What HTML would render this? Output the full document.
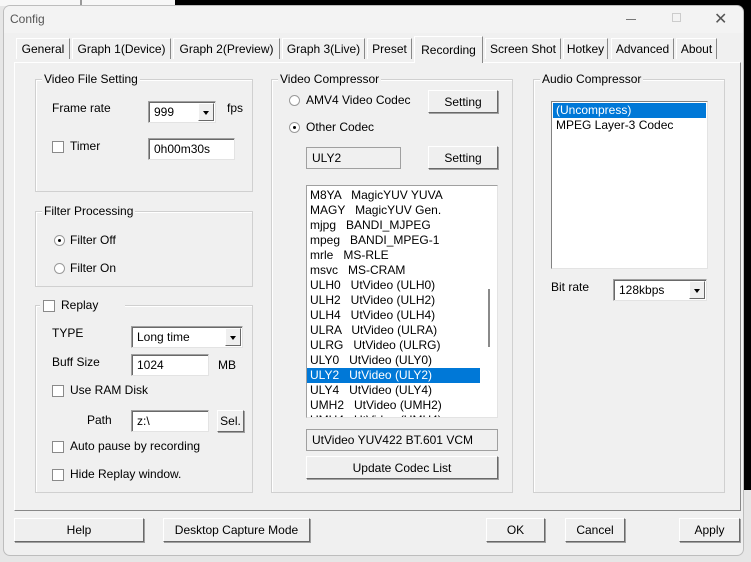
<!DOCTYPE html>
<html><head><meta charset="utf-8"><style>
*{box-sizing:border-box;margin:0;padding:0}
body{width:751px;height:562px;position:relative;overflow:hidden;background:#e6e6e6;font-family:"Liberation Sans",Arial,sans-serif;font-size:12px;color:#000}
.a{position:absolute}
.win{left:3px;top:5px;width:741px;height:551px;background:#f0f0f0;border:1px solid #bdbdbd;border-radius:7px;overflow:hidden}
.tb{left:0;top:0;width:100%;height:27px;background:#f3f3f3}
.tab{position:absolute;top:38px;height:21px;border:1px solid #fff;border-right-color:#888;border-bottom:none;background:#f0f0f0;text-align:center;line-height:20px;font-size:12px}
.grp{position:absolute;border:1px solid #d0d0d0;box-shadow:inset 1px 1px 0 #fff}
.grp>span{position:absolute;top:-8px;left:6px;background:#f0f0f0;padding:0 2px;font-size:12px}
.btn{position:absolute;background:#efefef;border:1px solid #fff;border-right-color:#696969;border-bottom-color:#696969;box-shadow:1px 1px 0 #a0a0a0;text-align:center;font-size:12px}
.edit{position:absolute;background:#fff;border:1px solid #a0a0a0;border-right-color:#e3e3e3;border-bottom-color:#e3e3e3;box-shadow:inset 1px 1px 0 #696969;padding-left:5px;font-size:12px}
.cb{position:absolute;width:12px;height:12px;background:#fff;border:1px solid #8a8a8a}
.rb{position:absolute;width:11px;height:11px;border-radius:50%;background:#fff;border:1px solid #9a9a9a}
.rb.on::after{content:"";position:absolute;left:3px;top:3px;width:3px;height:3px;border-radius:50%;background:#000}
.dd{position:absolute;right:1px;top:1px;bottom:1px;width:16px;background:#efefef;border:1px solid #fff;border-right-color:#696969;border-bottom-color:#696969}
.dd::after{content:"";position:absolute;left:4px;top:7px;border:3px solid transparent;border-top:4px solid #000}
.t{position:absolute;font-size:12px;white-space:nowrap}
.li{height:15px;line-height:15px;padding-left:3px;white-space:pre}
.sel{background:#0078d7;color:#fff}
</style></head><body>
<div class="a" style="left:0;top:0;width:175px;height:6px;background:#f7f7f7"></div>
<div class="a" style="left:175px;top:0;width:576px;height:490px;background:#000"></div>
<div class="a" style="left:80px;top:0;width:2px;height:6px;background:#999"></div>
<div class="a win">
 <div class="a tb"></div>
 <div class="t" style="left:6px;top:6px;color:#555;font-size:12px">Config</div>
 <div class="a" style="left:622px;top:13px;width:10px;height:1px;background:#777"></div>
 <div class="a" style="left:668px;top:7px;width:9px;height:9px;border:1px solid #ccc"></div>
 <div class="t" style="left:710px;top:3px;font-size:16px;color:#555">✕</div>
</div>
<!-- tab panel -->
<div class="a" style="left:14px;top:62px;width:727px;height:449px;border:1px solid #fff;border-right-color:#888;border-bottom-color:#888"></div>
<div class="tab" style="left:16px;width:54px">General</div>
<div class="tab" style="left:72px;width:99px">Graph 1(Device)</div>
<div class="tab" style="left:173px;width:107px">Graph 2(Preview)</div>
<div class="tab" style="left:282px;width:83px">Graph 3(Live)</div>
<div class="tab" style="left:367px;width:45px">Preset</div>
<div class="tab" style="left:414px;width:69px;top:36px;height:27px;z-index:2;line-height:26px;margin-top:0">Recording</div>
<div class="tab" style="left:485px;width:76px">Screen Shot</div>
<div class="tab" style="left:563px;width:45px">Hotkey</div>
<div class="tab" style="left:611px;width:63px">Advanced</div>
<div class="tab" style="left:676px;width:41px">About</div>

<!-- Video File Setting -->
<div class="grp" style="left:35px;top:79px;width:218px;height:113px"><span>Video File Setting</span></div>
<div class="t" style="left:52px;top:101px">Frame rate</div>
<div class="edit" style="left:148px;top:101px;width:68px;height:22px;line-height:20px">999<div class="dd"></div></div>
<div class="t" style="left:227px;top:101px">fps</div>
<div class="cb" style="left:52px;top:141px"></div>
<div class="t" style="left:70px;top:139px">Timer</div>
<div class="edit" style="left:148px;top:138px;width:87px;height:22px;line-height:20px">0h00m30s</div>

<!-- Filter -->
<div class="grp" style="left:35px;top:211px;width:218px;height:76px"><span>Filter Processing</span></div>
<div class="rb on" style="left:54px;top:235px"></div>
<div class="t" style="left:70px;top:233px">Filter Off</div>
<div class="rb" style="left:54px;top:263px"></div>
<div class="t" style="left:70px;top:261px">Filter On</div>

<!-- Replay -->
<div class="grp" style="left:35px;top:305px;width:218px;height:188px"></div>
<div class="a" style="left:40px;top:298px;width:85px;height:14px;background:#f0f0f0"></div>
<div class="cb" style="left:43px;top:300px"></div>
<div class="t" style="left:61px;top:298px">Replay</div>
<div class="t" style="left:52px;top:326px">TYPE</div>
<div class="edit" style="left:131px;top:326px;width:112px;height:22px;line-height:20px">Long time<div class="dd"></div></div>
<div class="t" style="left:52px;top:355px">Buff Size</div>
<div class="edit" style="left:131px;top:354px;width:78px;height:22px;line-height:20px">1024</div>
<div class="t" style="left:218px;top:358px">MB</div>
<div class="cb" style="left:52px;top:385px"></div>
<div class="t" style="left:70px;top:383px">Use RAM Disk</div>
<div class="t" style="left:87px;top:413px">Path</div>
<div class="edit" style="left:131px;top:410px;width:78px;height:22px;line-height:20px">z:\</div>
<div class="btn" style="left:217px;top:410px;width:27px;height:22px;line-height:20px">Sel.</div>
<div class="cb" style="left:52px;top:441px"></div>
<div class="t" style="left:70px;top:439px">Auto pause by recording</div>
<div class="cb" style="left:52px;top:469px"></div>
<div class="t" style="left:70px;top:467px">Hide Replay window.</div>

<!-- Video Compressor -->
<div class="grp" style="left:271px;top:79px;width:242px;height:414px"><span>Video Compressor</span></div>
<div class="rb" style="left:289px;top:95px"></div>
<div class="t" style="left:306px;top:93px">AMV4 Video Codec</div>
<div class="btn" style="left:428px;top:90px;width:70px;height:23px;line-height:22px">Setting</div>
<div class="rb on" style="left:289px;top:122px"></div>
<div class="t" style="left:306px;top:120px">Other Codec</div>
<div class="a" style="left:306px;top:147px;width:95px;height:22px;border:1px solid #a0a0a0;background:#f0f0f0;line-height:20px;padding-left:5px">ULY2</div>
<div class="btn" style="left:428px;top:146px;width:70px;height:23px;line-height:22px">Setting</div>
<div class="a" style="left:306px;top:185px;width:192px;height:233px;background:#fff;border:1px solid #a0a0a0;border-right-color:#e3e3e3;border-bottom-color:#e3e3e3;overflow:hidden;padding-top:2px">
<div class="li">M8YA   MagicYUV YUVA</div>
<div class="li">MAGY   MagicYUV Gen.</div>
<div class="li">mjpg   BANDI_MJPEG</div>
<div class="li">mpeg   BANDI_MPEG-1</div>
<div class="li">mrle   MS-RLE</div>
<div class="li">msvc   MS-CRAM</div>
<div class="li">ULH0   UtVideo (ULH0)</div>
<div class="li">ULH2   UtVideo (ULH2)</div>
<div class="li">ULH4   UtVideo (ULH4)</div>
<div class="li">ULRA   UtVideo (ULRA)</div>
<div class="li">ULRG   UtVideo (ULRG)</div>
<div class="li">ULY0   UtVideo (ULY0)</div>
<div class="li sel" style="width:173px">ULY2   UtVideo (ULY2)</div>
<div class="li">ULY4   UtVideo (ULY4)</div>
<div class="li">UMH2   UtVideo (UMH2)</div>
<div class="li">UMH4   UtVideo (UMH4)</div>
<div class="a" style="left:181px;top:103px;width:2px;height:58px;background:#8a8a8a"></div>
</div>
<div class="a" style="left:306px;top:429px;width:192px;height:22px;border:1px solid #a0a0a0;background:#f0f0f0;line-height:20px;padding-left:5px">UtVideo YUV422 BT.601 VCM</div>
<div class="btn" style="left:306px;top:456px;width:192px;height:23px;line-height:22px">Update Codec List</div>

<!-- Audio -->
<div class="grp" style="left:533px;top:79px;width:192px;height:414px"><span>Audio Compressor</span></div>
<div class="a" style="left:551px;top:101px;width:157px;height:168px;background:#fff;border:1px solid #828282;border-right-color:#e3e3e3;border-bottom-color:#e3e3e3;padding:1px">
<div class="li sel">(Uncompress)</div>
<div class="li">MPEG Layer-3 Codec</div>
</div>
<div class="t" style="left:551px;top:280px">Bit rate</div>
<div class="edit" style="left:613px;top:279px;width:94px;height:22px;line-height:20px">128kbps<div class="dd"></div></div>

<!-- bottom buttons -->
<div class="btn" style="left:14px;top:518px;width:130px;height:24px;line-height:23px">Help</div>
<div class="btn" style="left:163px;top:518px;width:147px;height:24px;line-height:23px">Desktop Capture Mode</div>
<div class="btn" style="left:486px;top:518px;width:59px;height:24px;line-height:23px">OK</div>
<div class="btn" style="left:565px;top:518px;width:60px;height:24px;line-height:23px">Cancel</div>
<div class="btn" style="left:679px;top:518px;width:61px;height:24px;line-height:23px">Apply</div>
</body></html>
